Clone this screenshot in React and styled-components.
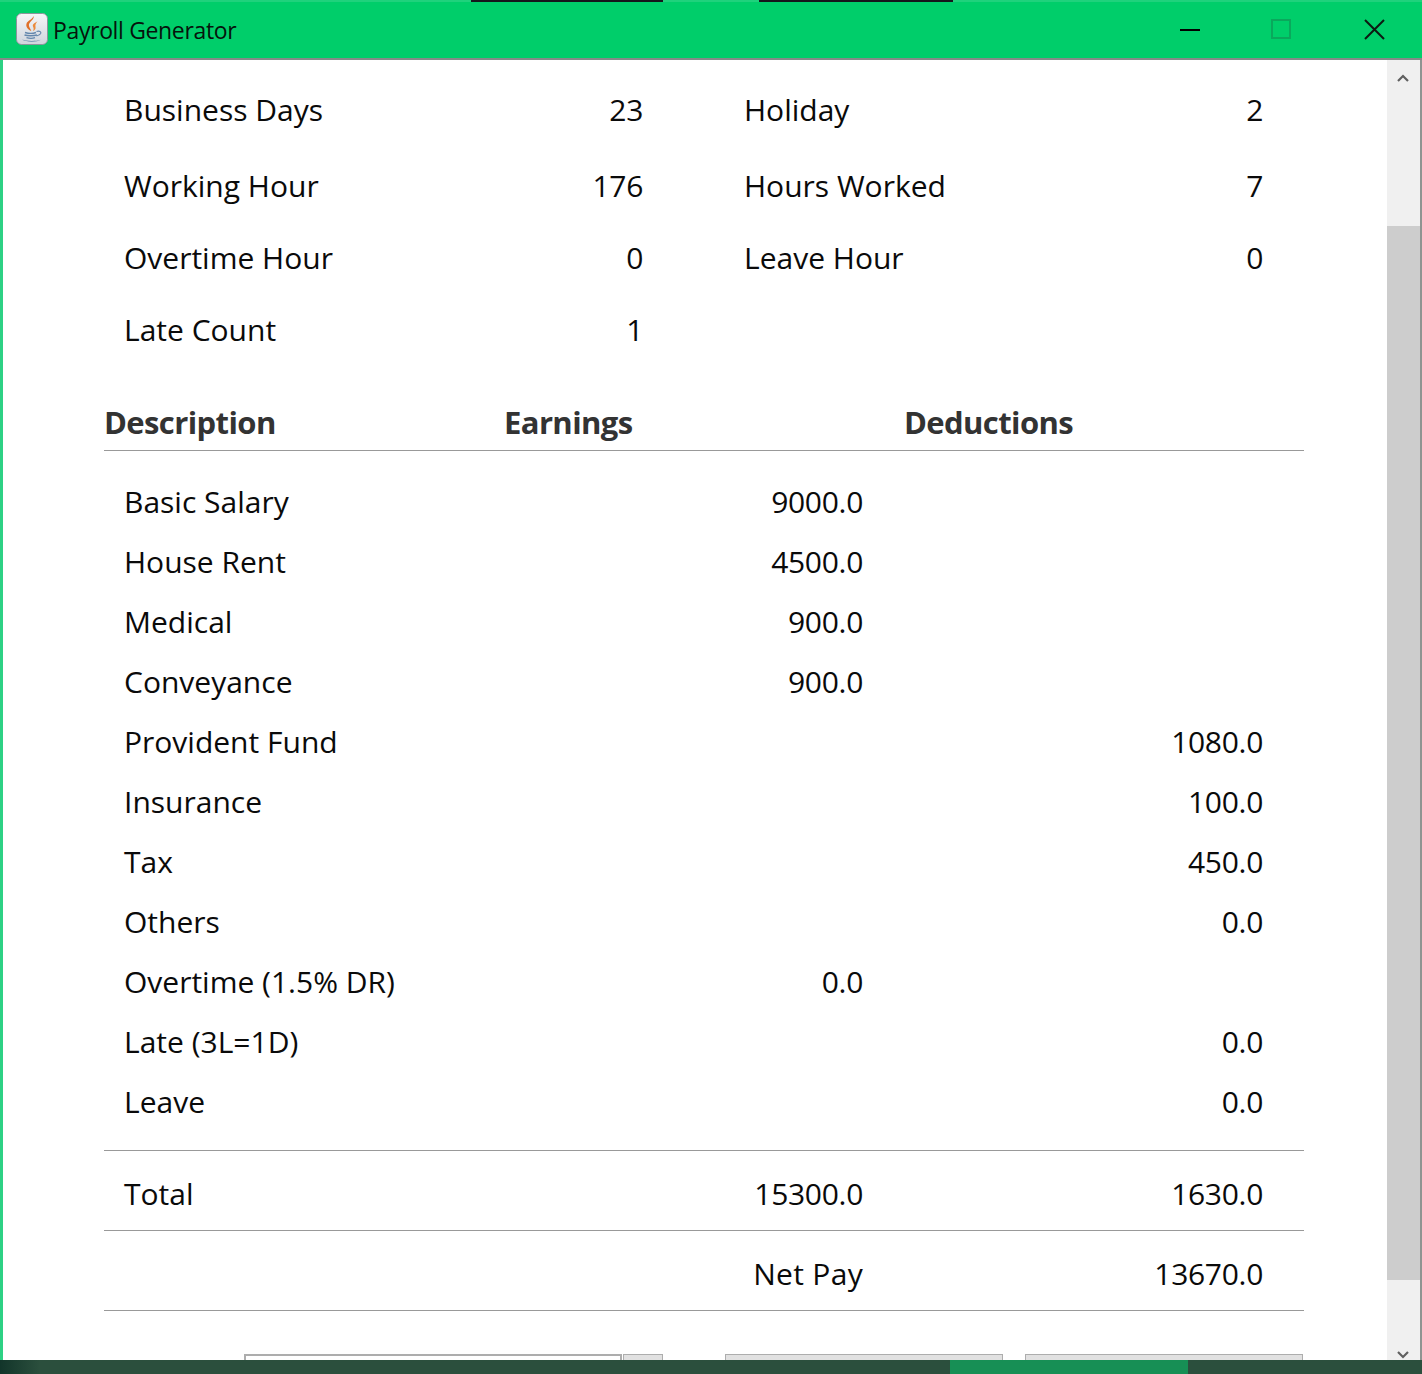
import React from "react";
import styled, { createGlobalStyle } from "styled-components";

const Global = createGlobalStyle`
  html, body { margin: 0; padding: 0; background: #fff; }
  body { font-family: "Open Sans", "Noto Sans", sans-serif; color: #0a0a0a; }
  * { box-sizing: border-box; }
`;
const Page = styled.div`width: 1422px; height: 1374px; display: flex; flex-direction: column; overflow: hidden;`;
const Win = styled.div`height: 1360px; display: flex; flex-direction: column; overflow: hidden;`;
const TitleBar = styled.header`
  position: relative; height: 60px; flex: none; display: flex; align-items: center; background: #00ce6a;
  border-bottom: 2px solid #858a88; border-top: 2px solid #1fd27c; padding-left: 16px;
`;
const TopStrip = styled.span`
  position: absolute; top: -2px; left: ${p => p.$left}px; width: ${p => p.$width}px; height: 2px; background: #16161c;
`;
const AppIcon = styled.svg`width: 32px; height: 32px; flex: none; margin-top: -2px;`;
const TitleText = styled.span`margin-left: 5px; font-size: 23px; letter-spacing: -0.35px; color: #06130c; margin-top: 0;`;
const WinButtons = styled.div`margin-left: auto; display: flex; align-items: center; margin-top: -1px;`;
const WinBtn = styled.svg`width: 22px; height: 22px; margin-left: ${p => p.$ml}px; flex: none; display: block;`;
const Spacer = styled.span`width: 36px; flex: none;`;
const Main = styled.div`
  flex: 1; min-height: 0; display: flex; border-left: 3px solid #2dd184; border-right: 2px solid #8f9491;
`;
const Content = styled.main`width: 1384px; flex: none; padding: 10px 0 0 101px; overflow: hidden;`;
const Stats = styled.section`width: 1160px; display: grid; grid-template-columns: 519px 519px; column-gap: 101px; padding-left: 20px;`;
const StatRow = styled.div`
  grid-column: 1 / -1; display: grid; grid-template-columns: subgrid; height: ${p => p.$h}px; align-items: center;
`;
const Stat = styled.div`display: flex; justify-content: space-between; font-size: 30px; line-height: 40px;`;
const StatValue = styled.span`letter-spacing: -0.3px;`;
const TableHead = styled.div`
  margin-top: 34px; width: 1200px; display: grid; grid-template-columns: repeat(3, 400px); height: 51px; align-items: center;
  border-bottom: 1px solid #999; padding-bottom: 7px;
`;
const HeadCell = styled.div`font-size: 31px; font-weight: 700; color: #333; letter-spacing: -0.6px;`;
const Rows = styled.div`width: 1200px; padding: 20px 0 19px; border-bottom: 1px solid #999;`;
const Row = styled.div`
  width: 1200px; height: ${p => p.$h || 60}px; display: grid; grid-template-columns: 400px 359px 400px; align-items: center;
  font-size: 30px; padding-top: ${p => p.$pt || 0}px; border-bottom: ${p => p.$rule ? "1px solid #999" : "none"};
`;
const Label = styled.div`padding-left: 20px;`;
const Num = styled.div`text-align: right; letter-spacing: -0.3px;`;
const NetLabel = styled.div`text-align: right; letter-spacing: 0.3px;`;
const Controls = styled.div`margin-top: 43px; display: flex; width: 1200px; padding-left: 140px; height: 50px;`;
const Input = styled.div`width: 378px; height: 50px; background: #fff; border: 2px solid #adadad;`;
const Btn = styled.div`
  width: ${p => p.$w}px; margin-left: ${p => p.$ml}px; height: 50px; background: #e1e1e1; border: 1px solid #adadad;
`;
const Scroll = styled.aside`width: 33px; flex: none; background: #f0f0f0; position: relative; display: flex; flex-direction: column;`;
const Thumb = styled.div`position: absolute; top: 166px; left: 0; right: 0; height: 1054px; background: #cdcdcd;`;
const Chevron = styled.svg`width: 16px; height: 16px; position: absolute; left: 8px; ${p => p.$pos};`;
const Taskbar = styled.footer`
  height: 14px; flex: none; display: flex; background: #2b4f3d;
  background-image: linear-gradient(90deg, #12352a 0, #2b4f3d 40px);
`;
const Active = styled.div`margin-left: 950px; width: 238px; background: #178f55;`;

const statData = [
  [80, ["Business Days", "23"], ["Holiday", "2"]],
  [72, ["Working Hour", "176"], ["Hours Worked", "7"]],
  [72, ["Overtime Hour", "0"], ["Leave Hour", "0"]],
  [72, ["Late Count", "1"], null],
];
const rowData = [
  ["Basic Salary", "9000.0", ""], ["House Rent", "4500.0", ""], ["Medical", "900.0", ""], ["Conveyance", "900.0", ""],
  ["Provident Fund", "", "1080.0"], ["Insurance", "", "100.0"], ["Tax", "", "450.0"], ["Others", "", "0.0"],
  ["Overtime (1.5% DR)", "0.0", ""], ["Late (3L=1D)", "", "0.0"], ["Leave", "", "0.0"],
];

export default function App() {
  return (
    <Page>
      <Global />
      <Win>
        <TitleBar>
          <TopStrip $left={471} $width={192} />
          <TopStrip $left={759} $width={194} />
          <AppIcon viewBox="0 0 32 32">
            <defs>
              <linearGradient id="tile" x1="0" y1="0" x2="0" y2="1">
                <stop offset="0" stopColor="#f6f6f8" />
                <stop offset="1" stopColor="#cfd5dd" />
              </linearGradient>
            </defs>
            <rect x="0.5" y="0.5" width="31" height="31" rx="5" fill="url(#tile)" stroke="#8d949c" />
            <path d="M17.500 3c1.500 3.500-5.500 6-4.500 10 .4 1.700 1.800 3.200 2.300 5-3.300-1.600-5.800-4-4.800-7.300C11.400 7.600 16.500 6.500 17.500 3z" fill="#e0702a" />
            <path d="M21.500 8.500c-3.500 1.500-5.500 3-4.300 5.500.6 1.200.6 2.600-.2 4 1.500-.6 3-1.800 2.500-4-.4-1.800.2-3.800 2-5.500z" fill="#eb8a3c" />
            <path d="M9 19.500c3 .9 8.500.9 11 0M8.500 22c3 1 9.500 1 12.500 0M10.500 24.700c2.500.7 6.500.7 8.500 0" stroke="#6487ad" strokeWidth="1.400" fill="none" />
            <path d="M20.500 18.500c3-1 5 .3 4.200 2-.6 1.200-2.300 2-4.200 2.500" stroke="#6487ad" strokeWidth="1.100" fill="none" />
            <path d="M6 26.500c4 1.700 14 1.900 19 .2-4 2.600-15 2.600-19-.2z" fill="#6487ad" />
          </AppIcon>
          <TitleText>Payroll Generator</TitleText>
          <WinButtons>
            <WinBtn viewBox="0 0 22 22"><path d="M0 11h20" stroke="#000" strokeWidth="2" /></WinBtn>
            <WinBtn $ml={69} viewBox="0 0 22 22"><rect x="1" y="1" width="18" height="18" fill="none" stroke="#0aa85c" strokeWidth="2" /></WinBtn>
            <WinBtn $ml={71} viewBox="0 0 22 22"><path d="M1 1l19 19M20 1L1 20" stroke="#0c1a12" strokeWidth="2" /></WinBtn>
            <Spacer />
          </WinButtons>
        </TitleBar>
        <Main>
          <Content>
            <Stats>
              {statData.map(([h, a, b], i) => (
                <StatRow key={i} $h={h}>
                  <Stat><span>{a[0]}</span><StatValue>{a[1]}</StatValue></Stat>
                  {b && <Stat><span>{b[0]}</span><StatValue>{b[1]}</StatValue></Stat>}
                </StatRow>
              ))}
            </Stats>
            <TableHead>
              <HeadCell>Description</HeadCell>
              <HeadCell>Earnings</HeadCell>
              <HeadCell>Deductions</HeadCell>
            </TableHead>
            <Rows>
              {rowData.map(r => (
                <Row key={r[0]}>
                  <Label>{r[0]}</Label><Num>{r[1]}</Num><Num>{r[2]}</Num>
                </Row>
              ))}
            </Rows>
            <Row $h={80} $pt={5} $rule><Label>Total</Label><Num>15300.0</Num><Num>1630.0</Num></Row>
            <Row $h={80} $pt={5} $rule><Label /><NetLabel>Net Pay</NetLabel><Num>13670.0</Num></Row>
            <Controls>
              <Input />
              <Btn $w={40} $ml={1} />
              <Btn $w={278} $ml={62} />
              <Btn $w={278} $ml={22} />
            </Controls>
          </Content>
          <Scroll>
            <Chevron $pos="top: 10px" viewBox="0 0 16 16"><path d="M3 11l5-5 5 5" fill="none" stroke="#606060" strokeWidth="2.200" /></Chevron>
            <Thumb />
            <Chevron $pos="bottom: -3px" viewBox="0 0 16 16"><path d="M3 5l5 5 5-5" fill="none" stroke="#606060" strokeWidth="2.200" /></Chevron>
          </Scroll>
        </Main>
      </Win>
      <Taskbar><Active /></Taskbar>
    </Page>
  );
}
